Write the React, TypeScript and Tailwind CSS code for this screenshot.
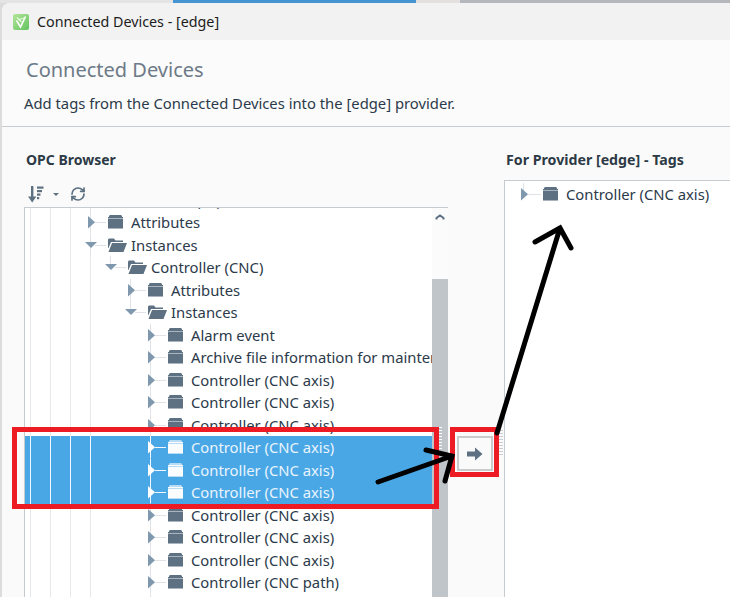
import { RefreshCw } from "lucide-react";

type Node = {
  depth: number;
  label: string;
  open?: boolean;
  selected?: boolean;
  stub?: boolean; // guide line stops at the arrow
};

const leftTree: Node[] = [
  { depth: 0, label: "Methods (all)" },
  { depth: 0, label: "Attributes" },
  { depth: 0, label: "Instances", open: true },
  { depth: 1, label: "Controller (CNC)", open: true, stub: true },
  { depth: 2, label: "Attributes" },
  { depth: 2, label: "Instances", open: true, stub: true },
  { depth: 3, label: "Alarm event" },
  { depth: 3, label: "Archive file information for maintenance" },
  { depth: 3, label: "Controller (CNC axis)" },
  { depth: 3, label: "Controller (CNC axis)" },
  { depth: 3, label: "Controller (CNC axis)" },
  { depth: 3, label: "Controller (CNC axis)", selected: true },
  { depth: 3, label: "Controller (CNC axis)", selected: true },
  { depth: 3, label: "Controller (CNC axis)", selected: true },
  { depth: 3, label: "Controller (CNC axis)" },
  { depth: 3, label: "Controller (CNC axis)" },
  { depth: 3, label: "Controller (CNC axis)" },
  { depth: 3, label: "Controller (CNC path)" },
  { depth: 3, label: "Controller (CNC path)" },
];

function Folder({ selected }: { selected?: boolean }) {
  const main = selected ? "#fbfcfd" : "#5d7182";
  const soft = selected ? "#b9dcf5" : "#a9b4be";
  return (
    <svg width="15" height="14" viewBox="0 0 15 14" className="block shrink-0">
      <path d="M2 0h11l1 1v1H1V1z" fill={selected ? soft : main} />
      <rect x="0" y="2" width="15" height="1" fill={main} />
      <rect x="0" y="3" width="15" height="1" fill={soft} />
      <rect x="0" y="4" width="15" height="9" fill={main} />
      <rect x="0" y="13" width="15" height="1" fill={soft} />
    </svg>
  );
}

function OpenFolder() {
  return (
    <svg width="20" height="14" viewBox="0 0 20 14" className="block shrink-0 -ml-[1px] mr-[-4px]">
      <path d="M1 1.500 2 0.500h5l1.500 2H16v1.500H4L1.500 10H1z" fill="#5d7182" />
      <path d="M5 5H20L16.500 14H1.500z" fill="#5d7182" />
    </svg>
  );
}

function Expander({ node, wide }: { node: Node; wide?: boolean }) {
  const line = node.selected ? "#f1f7fc" : "#dfe3e8";
  const tri = node.selected ? "#ffffff" : "#7f98ae";
  const w = wide ? 20 : 18;
  return (
    <svg width={w} height="22.5" viewBox={`0 0 ${w} 22.5`} className="block shrink-0 overflow-visible">
      <line x1="0.5" x2="0.5" y1="0" y2={node.stub ? 8 : 22.5} stroke={line} />
      <line x1="5" x2={w - 2} y1="11.5" y2="11.5" stroke={line} />
      {node.open ? (
        <path d="M-5 8H7L1 14z" fill={tri} />
      ) : (
        <path d="M-2 5L5 11.25L-2 17.5z" fill={tri} />
      )}
    </svg>
  );
}

function TreeRow({ node }: { node: Node }) {
  const cols = [0, 1, 2, 3, 4, 5].slice(0, 3 + node.depth);
  return (
    <div
      className={`flex h-[22.5px] items-center whitespace-nowrap pl-[5px] ${
        node.selected ? "bg-[#49a7e6] text-[#e9f4fc]" : "text-[#2b3a4a]"
      }`}
    >
      {cols.map((c) => (
        <div
          key={c}
          className={`h-full w-5 shrink-0 ${
            c < 4 ? (node.selected ? "border-l border-[#f1f7fc]" : "border-l border-[#e6e8ec]") : ""
          }`}
        />
      ))}
      <Expander node={node} />
      {node.open ? <OpenFolder /> : <Folder selected={node.selected} />}
      <span className="ml-[8px]">{node.label}</span>
    </div>
  );
}

function SortIcon() {
  return (
    <svg width="16" height="17" viewBox="0 0 16 17" className="block" fill="#5d7182">
      <rect x="3" y="0" width="2.4" height="13" />
      <path d="M0 10.500h8.400L4.200 16.500z" />
      <rect x="9" y="0.5" width="6.5" height="2.2" />
      <rect x="9" y="4" width="5" height="2.2" />
      <rect x="9" y="7.5" width="3.5" height="2.2" />
      <rect x="9" y="11" width="2.2" height="2.2" />
    </svg>
  );
}

function AppIcon() {
  return (
    <svg width="16" height="16" viewBox="0 0 16 16" className="block shrink-0">
      <defs>
        <linearGradient id="appGreen" x1="0" y1="0" x2="1" y2="1">
          <stop offset="0" stopColor="#b5e59a" />
          <stop offset="1" stopColor="#62c45f" />
        </linearGradient>
      </defs>
      <rect width="16" height="16" rx="2" fill="url(#appGreen)" />
      <path d="M3.500 6.500 7.500 13 12.500 2.500" fill="none" stroke="#fff" strokeWidth="1.6" />
      <path d="M4 3.500 8.500 8M6 5.500 11 4" fill="none" stroke="#eafbe0" strokeWidth="1.2" />
    </svg>
  );
}

export default function App() {
  return (
    <div className="relative h-[597px] w-[730px] overflow-hidden bg-[#dcdcdc] font-['Noto_Sans',sans-serif] text-[14.8px] text-[#2b3a4a]">
      <div className="flex h-[3px]">
        <div className="w-[173px] bg-[#e4e4e4]" />
        <div className="w-[243px] bg-[#4495d1]" />
        <div className="w-[44px] bg-[#e2e1df]" />
        <div className="flex-1 bg-[#b4b7bb]" />
      </div>

      <div className="ml-[2px] flex h-[594px] flex-col overflow-hidden rounded-tl-lg bg-[#fafafa]">
        <div className="flex h-[37px] items-center gap-2 bg-[#f2f2f2] pl-[11px] text-[14.3px] text-[#1c1c1c]">
          <AppIcon />
          <span>Connected Devices - [edge]</span>
        </div>

        <div className="h-[87px] border-b border-[#c6cbd0] bg-[#fbfbfb] pl-[22px]">
          <div className="pl-[2px] pt-[16px] text-[20px] leading-[27px] text-[#6d7a87]">Connected Devices</div>
          <div className="pt-[11px] leading-[19px]">Add tags from the Connected Devices into the [edge] provider.</div>
        </div>

        <div className="flex flex-1">
          <div className="w-[446px] shrink-0 pl-[22px]">
            <div className="pl-[2px] pt-[23px] text-[14px] font-bold leading-[19px] text-[#2d3a46]">OPC Browser</div>
            <div className="flex h-[38px] items-center pl-[4px] pt-[12px]">
              <SortIcon />
              <span className="ml-[9px] h-0 w-0 border-x-[3px] border-t-[3px] border-x-transparent border-t-[#5d7182]" />
              <RefreshCw className="ml-[11px] h-[16px] w-[16px] text-[#5d7182]" strokeWidth={2.6} />
            </div>
            <div className="flex h-[390px] border-l border-t border-[#c6cbd0] bg-white">
              <div className="w-[407px] overflow-hidden">
                <div className="-mt-[19.5px]">
                  {leftTree.map((node, i) => (
                    <TreeRow key={i} node={node} />
                  ))}
                </div>
              </div>
              <div className="flex w-[16px] flex-col bg-[#fbfbfb]">
                <div className="flex h-[71px] justify-center pt-[6px]">
                  <svg width="10" height="6" viewBox="0 0 10 6" className="block" fill="none" stroke="#5d7182" strokeWidth="2">
                    <path d="M1.500 5.500V4L5 1.500 8.500 4v1.500" />
                  </svg>
                </div>
                <div className="flex-1 bg-[#c0c5c9]" />
              </div>
            </div>
          </div>

          <div className="w-[56px] shrink-0 pl-[9px] pt-[309px]">
            <div className="flex h-[35px] w-[36px] items-center justify-center border-2 border-[#c9cbcd] bg-[#fafafa]">
              <svg width="16" height="14" viewBox="0 0 16 14" className="block" fill="#5d7182">
                <path d="M0 4.500h8V0.500L15.500 7 8 13.500V9.500H0z" />
              </svg>
            </div>
          </div>

          <div className="flex-1">
            <div className="pl-[2px] pt-[23px] text-[14.2px] font-bold leading-[19px] text-[#2d3a46]">For Provider [edge] - Tags</div>
            <div className="mt-[11px] h-[417px] border-l border-t border-[#c6cbd0] bg-white">
              <div className="flex h-[26px] items-center pl-[18px] text-[#2b3a4a]">
                <Expander node={{ depth: 0, label: "", stub: true }} wide />
                <Folder />
                <span className="ml-[8px]">Controller (CNC axis)</span>
              </div>
            </div>
          </div>
        </div>
      </div>

      {/* annotations pasted on top of the screenshot */}
      <div className="absolute left-[439px] top-[427px] h-[30px] w-[3px] bg-[repeating-linear-gradient(180deg,#ffffff_0px,#ffffff_1px,transparent_1px,transparent_3px)]" />
      <div className="absolute left-[499px] top-[430px] h-[27px] w-[4px] bg-[repeating-linear-gradient(180deg,#c9ccd0_0px,#c9ccd0_1px,transparent_1px,transparent_3px)]" />
      <div className="absolute left-[12px] top-[427px] h-[82px] w-[427px] border-[5px] border-[#ed1c24]" />
      <div className="absolute left-[450px] top-[427px] h-[50px] w-[49px] border-[5px] border-[#ed1c24]" />
      <svg width="730" height="597" viewBox="0 0 730 597" className="absolute left-0 top-0" fill="none" stroke="#000" strokeWidth="5" strokeLinecap="round">
        <path d="M378 482 452 456M426 450 452 456 445 481" />
        <path d="M497 433 560 228M535 242 560 228 571 248" />
      </svg>
    </div>
  );
}
